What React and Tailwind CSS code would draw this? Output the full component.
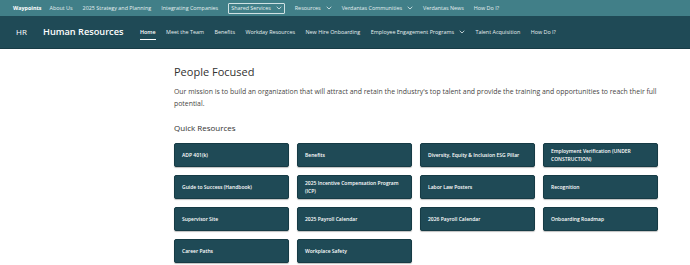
import React from 'react';

const topLinks = [
  { label: 'About Us' },
  { label: '2025 Strategy and Planning' },
  { label: 'Integrating Companies' },
  { label: 'Shared Services', menu: true, boxed: true },
  { label: 'Resources', menu: true },
  { label: 'Verdantas Communities', menu: true },
  { label: 'Verdantas News' },
  { label: 'How Do I?' },
];

const siteLinks = [
  { label: 'Home', active: true },
  { label: 'Meet the Team' },
  { label: 'Benefits' },
  { label: 'Workday Resources' },
  { label: 'New Hire Onboarding' },
  { label: 'Employee Engagement Programs', menu: true },
  { label: 'Talent Acquisition' },
  { label: 'How Do I?' },
];

const tiles = [
  'ADP 401(k)',
  'Benefits',
  'Diversity, Equity & Inclusion ESG Pillar',
  'Employment Verification (UNDER CONSTRUCTION)',
  'Guide to Success (Handbook)',
  '2025 Incentive Compensation Program (ICP)',
  'Labor Law Posters',
  'Recognition',
  'Supervisor Site',
  '2025 Payroll Calendar',
  '2026 Payroll Calendar',
  'Onboarding Roadmap',
  'Career Paths',
  'Workplace Safety',
];

const Chevron = () => (
  <svg width="6" height="4" viewBox="0 0 6 4" className="ml-[5px]" fill="none">
    <path d="M0.7 0.8 L3 3 L5.3 0.8" stroke="currentColor" strokeWidth="0.8" />
  </svg>
);

export default function App() {
  return (
    <div className="w-[690px] h-[265px] bg-white overflow-hidden font-['Open_Sans',sans-serif]">
      <div className="h-[16px] bg-[#417f88] flex items-center pl-[13px] text-[5.4px] text-[#e6f0f1]">
        <span className="font-bold text-white mr-[8px]">Waypoints</span>
        <div className="flex items-center gap-[10px]">
          {topLinks.map(l => (
            <span key={l.label}
              className={`flex items-center ${l.boxed ? 'border border-[#cfe1e3] rounded-[1px] px-[2px] h-[11px]' : ''}`}>
              {l.label}{l.menu && <Chevron />}
            </span>
          ))}
        </div>
      </div>

      <div className="h-[33px] bg-[#1f4a56] border-b border-[#173b45] flex items-center text-white">
        <span className="ml-[16px] text-[8px] w-[27px]">HR</span>
        <span className="text-[9.2px] font-semibold w-[97px]">Human Resources</span>
        <div className="flex items-center gap-[10.5px] text-[5.4px] text-[#e8f0f1]">
          {siteLinks.map(l => (
            <span key={l.label} className={`relative flex items-center ${l.active ? 'font-semibold text-white' : ''}`}>
              {l.label}{l.menu && <Chevron />}
              {l.active && <span className="absolute left-0 right-0 top-[11px] h-[1px] bg-white" />}
            </span>
          ))}
        </div>
      </div>

      <div className="ml-[174px] w-[484px] pt-[14px] text-[#323130]">
        <h1 className="text-[11px] leading-[18px]">People Focused</h1>
        <p className="mt-[5px] text-[6.9px] leading-[12px] text-[#484644]">
          Our mission is to build an organization that will attract and retain the industry's top talent and provide the training and opportunities to reach their full potential.
        </p>
        <h2 className="mt-[12px] text-[8px] leading-[12px]">Quick Resources</h2>
        <div className="mt-[9px] grid grid-cols-4 gap-x-[8px] gap-y-[8px]">
          {tiles.map(t => (
            <div key={t}
              className="h-[24px] bg-[#1f4a56] border border-[#163b45] rounded-[2px] shadow-[0_1px_1px_rgba(0,0,0,0.25)] flex items-center px-[7px] text-[5px] leading-[8px] font-semibold text-white">
              {t}
            </div>
          ))}
        </div>
      </div>
    </div>
  );
}
